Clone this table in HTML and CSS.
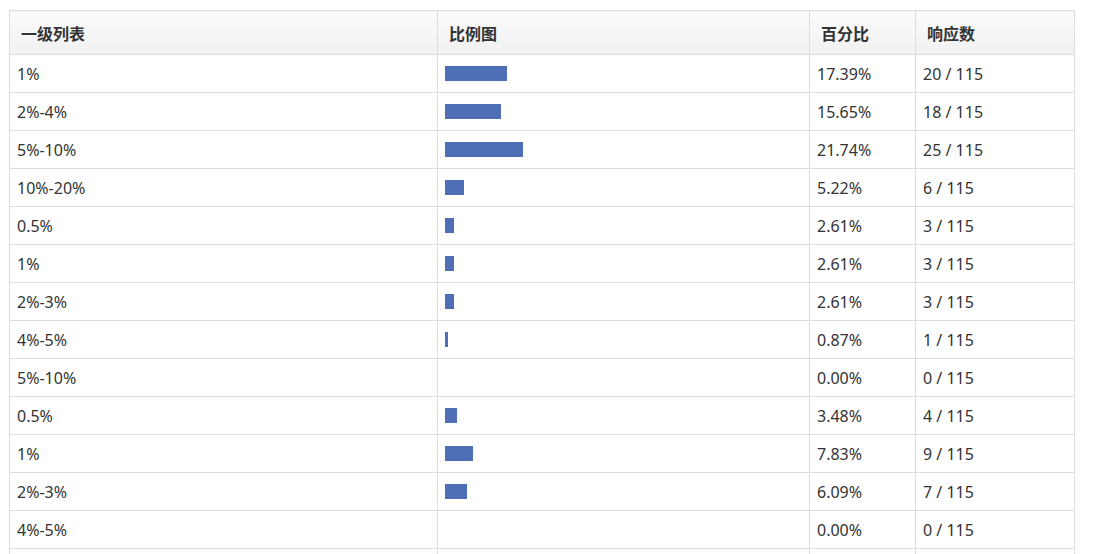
FILE: index.html
```html
<!DOCTYPE html>
<html lang="zh">
<head>
<meta charset="utf-8">
<link rel="stylesheet" href="styles.css">
</head>
<body>
<div class="page">
<table class="stats">
  <colgroup>
    <col class="c1"><col class="c2"><col class="c3"><col class="c4">
  </colgroup>
  <thead>
    <tr><th>一级列表</th><th>比例图</th><th>百分比</th><th>响应数</th></tr>
  </thead>
  <tbody>
    <tr><td>1%</td><td><div class="bar" style="width:17.39%"></div></td><td>17.39%</td><td>20 / 115</td></tr>
    <tr><td>2%-4%</td><td><div class="bar" style="width:15.65%"></div></td><td>15.65%</td><td>18 / 115</td></tr>
    <tr><td>5%-10%</td><td><div class="bar" style="width:21.74%"></div></td><td>21.74%</td><td>25 / 115</td></tr>
    <tr><td>10%-20%</td><td><div class="bar" style="width:5.22%"></div></td><td>5.22%</td><td>6 / 115</td></tr>
    <tr><td>0.5%</td><td><div class="bar" style="width:2.61%"></div></td><td>2.61%</td><td>3 / 115</td></tr>
    <tr><td>1%</td><td><div class="bar" style="width:2.61%"></div></td><td>2.61%</td><td>3 / 115</td></tr>
    <tr><td>2%-3%</td><td><div class="bar" style="width:2.61%"></div></td><td>2.61%</td><td>3 / 115</td></tr>
    <tr><td>4%-5%</td><td><div class="bar" style="width:0.87%"></div></td><td>0.87%</td><td>1 / 115</td></tr>
    <tr><td>5%-10%</td><td></td><td>0.00%</td><td>0 / 115</td></tr>
    <tr><td>0.5%</td><td><div class="bar" style="width:3.48%"></div></td><td>3.48%</td><td>4 / 115</td></tr>
    <tr><td>1%</td><td><div class="bar" style="width:7.83%"></div></td><td>7.83%</td><td>9 / 115</td></tr>
    <tr><td>2%-3%</td><td><div class="bar" style="width:6.09%"></div></td><td>6.09%</td><td>7 / 115</td></tr>
    <tr><td>4%-5%</td><td></td><td>0.00%</td><td>0 / 115</td></tr>
    <tr class="tail"><td></td><td></td><td></td><td></td></tr>
  </tbody>
</table>
</div>
</body>
</html>
```
FILE: styles.css
```css
html, body {
  margin: 0;
  padding: 0;
  background: #fff;
  overflow: hidden;
}
.page {
  padding: 10px 0 0 9px;
}
.stats {
  border-collapse: collapse;
  table-layout: fixed;
  width: 1065px;
  font-family: "Noto Sans", "Noto Sans CJK SC", sans-serif;
  font-size: 16px;
  color: #333;
}
.c1 { width: 428px; }
.c2 { width: 372px; }
.c3 { width: 106px; }
.c4 { width: 159px; }
.stats th, .stats td {
  border: 1px solid #ddd;
  padding: 0 7px;
  text-align: left;
  vertical-align: middle;
}
.stats th {
  height: 43px;
  padding: 0 10px 0 11px;
  font-weight: bold;
  background: linear-gradient(to bottom, #fbfbfb, #f1f1f1);
}
.stats td {
  height: 37px;
}
.bar {
  height: 15px;
  background: #4e6fb5;
}
```
